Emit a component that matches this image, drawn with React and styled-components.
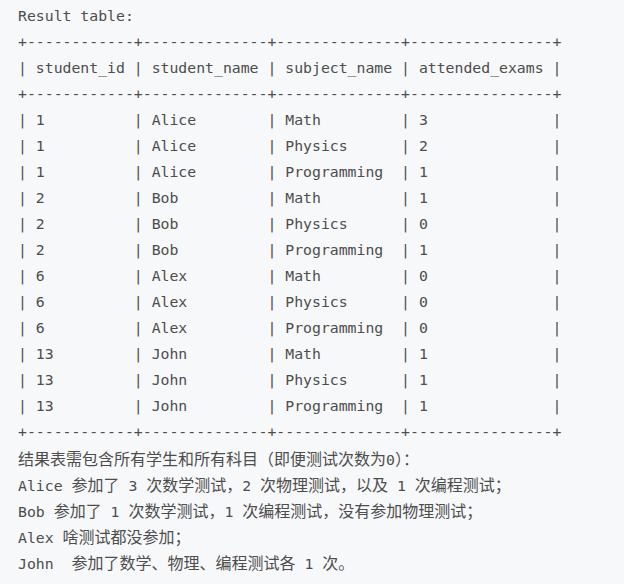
import React from 'react';
import styled, { createGlobalStyle } from 'styled-components';

const Global = createGlobalStyle`
  html, body {
    margin: 0;
    background: #f7f8fa;
  }
`;

const Block = styled.pre`
  margin: 0;
  padding: 3px 18px 0;
  min-height: 584px;
  box-sizing: border-box;

  background: #f7f8fa;
  color: #4d4d4d;

  font-family: 'DejaVu Sans Mono', 'Noto Sans CJK SC', monospace;
  font-size: 14.8px;
  line-height: 26px;
  white-space: pre;
`;
Block.displayName = 'Block';

const Line = styled.div`
  height: 26px;
`;
Line.displayName = 'Line';

const Han = styled.span`
  font-family: 'Noto Sans CJK SC', sans-serif;
  font-size: 16px;
`;
Han.displayName = 'Han';

const columns = [
  { name: 'student_id', width: 12 },
  { name: 'student_name', width: 14 },
  { name: 'subject_name', width: 14 },
  { name: 'attended_exams', width: 16 }
];

const rows = [
  [1, 'Alice', 'Math', 3],
  [1, 'Alice', 'Physics', 2],
  [1, 'Alice', 'Programming', 1],
  [2, 'Bob', 'Math', 1],
  [2, 'Bob', 'Physics', 0],
  [2, 'Bob', 'Programming', 1],
  [6, 'Alex', 'Math', 0],
  [6, 'Alex', 'Physics', 0],
  [6, 'Alex', 'Programming', 0],
  [13, 'John', 'Math', 1],
  [13, 'John', 'Physics', 1],
  [13, 'John', 'Programming', 1]
];

const notes = [
  '结果表需包含所有学生和所有科目（即便测试次数为0）：',
  'Alice 参加了 3 次数学测试，2 次物理测试，以及 1 次编程测试；',
  'Bob 参加了 1 次数学测试，1 次编程测试，没有参加物理测试；',
  'Alex 啥测试都没参加；',
  'John  参加了数学、物理、编程测试各 1 次。'
];

const border = '+' + columns.map(c => '-'.repeat(c.width)).join('+') + '+';
const tableRow = cells =>
  '|' + cells.map((v, i) => (' ' + v).padEnd(columns[i].width, ' ')).join('|') + '|';

// split into latin / han runs so wide glyphs keep a full 16px em
const Mixed = ({ text }) =>
  text.split(/([^\x00-\x7f]+)/).map((part, i) =>
    /[^\x00-\x7f]/.test(part) ? <Han key={i}>{part}</Han> : part
  );

export default function App() {
  const lines = [
    'Result table:',
    border,
    tableRow(columns.map(c => c.name)),
    border,
    ...rows.map(tableRow),
    border
  ];
  return (
    <>
      <Global />
      <Block>
        {lines.map((l, i) => <Line key={i}>{l}</Line>)}
        {notes.map((n, i) => (
          <Line key={'n' + i}>
            <Mixed text={n} />
          </Line>
        ))}
      </Block>
    </>
  );
}
